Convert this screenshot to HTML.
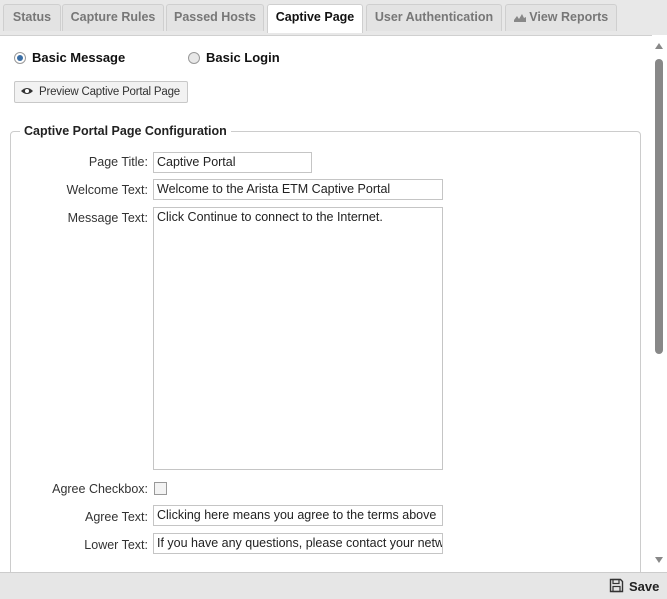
<!DOCTYPE html>
<html><head><style>
*{box-sizing:border-box}
body{margin:0;width:667px;height:599px;overflow:hidden;background:#e8e8e8;font-family:"Liberation Sans",sans-serif;font-size:12.5px;color:#222;position:relative}
.tab{position:absolute;top:4px;height:27px;border:1px solid #cfcfcf;border-bottom:none;border-radius:3px 3px 0 0;background:#e3e3e3;color:#777;font-weight:bold;font-size:12.5px;line-height:25px;text-align:center}
.tab.a{background:#fff;color:#111;height:29px}
.panel{position:absolute;left:0;top:35px;width:667px;height:537px;background:#fff;border-top:1px solid #d0d0d0}
.sb{position:absolute;right:0;top:35px;width:15px;height:537px;background:#fff}
.thumb{position:absolute;left:3px;top:24px;width:8px;height:295px;background:#888;border-radius:4px}
.footer{position:absolute;left:0;top:572px;width:667px;height:27px;background:#e6e6e6;border-top:1px solid #ccc}
.lbl{position:absolute;right:519px;text-align:right;color:#333;font-size:12.5px}
.inp{position:absolute;left:153px;border:1px solid #c5c5c5;background:#fff;padding:2px 3px;font-size:12.5px;color:#222;white-space:nowrap;overflow:hidden;line-height:15px}
.radio{position:absolute;width:12px;height:12px;border-radius:50%;border:1px solid #999;background:#e8e8e8}
</style></head><body>
<div class="tab" style="left:3px;width:58px">Status</div>
<div class="tab" style="left:62px;width:102px">Capture Rules</div>
<div class="tab" style="left:166px;width:98px">Passed Hosts</div>
<div class="tab a" style="left:267px;width:96px">Captive Page</div>
<div class="tab" style="left:366px;width:136px">User Authentication</div>
<div class="tab" style="left:505px;width:112px"><svg width="12" height="9" viewBox="0 0 12 9" style="vertical-align:-1px"><path d="M0 9V7L3 3 5 6 8 1 10 5 12 4V9z" fill="#888"/></svg> View Reports</div>
<div class="panel">
<div class="radio" style="left:14px;top:16px;background:#fff"><div style="position:absolute;left:2px;top:2px;width:6px;height:6px;border-radius:50%;background:#3a6ea5"></div></div>
<div style="position:absolute;left:32px;top:14px;font-weight:bold;font-size:13px;color:#111">Basic Message</div>
<div class="radio" style="left:188px;top:16px"></div>
<div style="position:absolute;left:206px;top:14px;font-weight:bold;font-size:13px;color:#111">Basic Login</div>
<div style="position:absolute;left:14px;top:45px;width:174px;height:22px;border:1px solid #c8c8c8;border-radius:2px;background:#f2f2f2;line-height:20px;padding-left:6px;color:#333;white-space:nowrap;font-size:11.5px;letter-spacing:-0.2px"><svg width="12" height="8" viewBox="0 0 12 8" style="vertical-align:0"><path d="M0 4Q6-2 12 4Q6 10 0 4z" fill="#333"/><circle cx="6" cy="4" r="2" fill="#fff"/></svg>&nbsp; Preview Captive Portal Page</div>
<div style="position:absolute;left:10px;top:95px;width:631px;height:460px;border:1px solid #ccc;border-radius:4px"></div>
<div style="position:absolute;left:20px;top:88px;background:#fff;padding:0 4px;font-weight:bold;font-size:12.5px;color:#222">Captive Portal Page Configuration</div>
</div>
<div class="lbl" style="top:155px">Page Title:</div>
<div class="inp" style="top:152px;width:159px;height:21px">Captive Portal</div>
<div class="lbl" style="top:183px">Welcome Text:</div>
<div class="inp" style="top:179px;width:290px;height:21px">Welcome to the Arista ETM Captive Portal</div>
<div class="lbl" style="top:211px">Message Text:</div>
<div class="inp" style="top:207px;width:290px;height:263px">Click Continue to connect to the Internet.</div>
<div class="lbl" style="top:482px">Agree Checkbox:</div>
<div style="position:absolute;left:154px;top:482px;width:13px;height:13px;border:1px solid #999;background:#f3f3f3"></div>
<div class="lbl" style="top:510px">Agree Text:</div>
<div class="inp" style="top:505px;width:290px;height:21px">Clicking here means you agree to the terms above</div>
<div class="lbl" style="top:538px">Lower Text:</div>
<div class="inp" style="top:533px;width:290px;height:21px">If you have any questions, please contact your network administrator.</div>
<div class="sb"><div style="position:absolute;left:3px;top:8px;border:4px solid transparent;border-bottom:6px solid #888;border-top:0"></div><div class="thumb"></div><div style="position:absolute;left:3px;top:522px;border:4px solid transparent;border-top:6px solid #888;border-bottom:0"></div></div>
<div class="footer">
<svg style="position:absolute;left:609px;top:5px" width="15" height="15" viewBox="0 0 15 15"><path d="M1.5 1.5h10l2 2v10h-12z" fill="none" stroke="#333" stroke-width="1.4"/><rect x="4" y="1.5" width="6" height="4" fill="none" stroke="#333" stroke-width="1.2"/><rect x="4" y="8.5" width="7" height="5" fill="none" stroke="#333" stroke-width="1.2"/></svg>
<div style="position:absolute;left:629px;top:6px;font-weight:bold;font-size:13px;color:#222">Save</div>
</div>
</body></html>
